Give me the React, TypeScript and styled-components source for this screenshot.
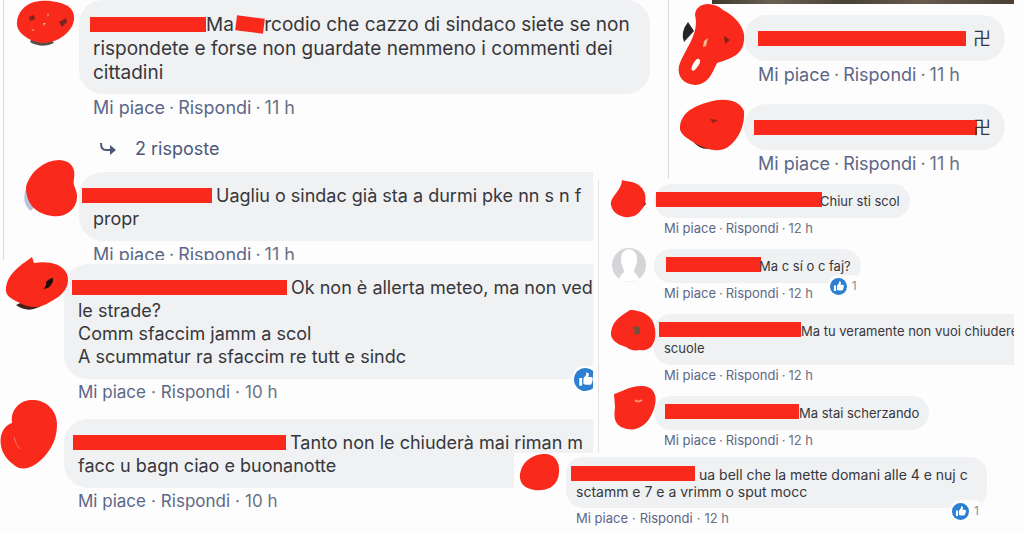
import React from "react";
import styled, { createGlobalStyle } from "styled-components";

const RED = "#f92a1c";

type Size = "large" | "medium" | "compact" | "small";

const bubbleSizes: Record<Size, { font: number; line: number; padding: string; radius: number }> = {
  large: { font: 19, line: 24, padding: "13px 14px 9px", radius: 24 },
  medium: { font: 18, line: 23, padding: "12px 14px 11px", radius: 24 },
  compact: { font: 14, line: 17, padding: "9px 10px 8px", radius: 17 },
  small: { font: 13, line: 17, padding: "8px 10px", radius: 17 },
};

const actionSizes: Record<Size, { font: number; gap: number; padding: string }> = {
  large: { font: 18, gap: 4, padding: "4px 14px 2px" },
  medium: { font: 17, gap: 5, padding: "3px 14px" },
  compact: { font: 13, gap: 4, padding: "1px 10px 3px" },
  small: { font: 13, gap: 3, padding: "1px 10px 3px" },
};

const Global = createGlobalStyle`
  * { box-sizing: border-box; }
  body { margin: 0; background: #fdfdfd; font-family: Inter, "Noto Sans CJK SC", sans-serif; color: #37373b; }
`;

const Page = styled.main`
  display: grid;
  grid-template-columns: 514fr 84fr 70fr 346fr;
  grid-template-rows: auto auto 1fr;
  height: 100vh;
  padding-right: 10px;
  overflow: hidden;
`;

const LeftStack = styled.div`
  grid-area: 1 / 1 / 4 / 4;
  display: flex;
  flex-direction: column;
  min-width: 0;
`;

const LeftClip = styled.section<{ $narrow?: boolean; $height?: number; $line?: boolean }>`
  width: ${(p) => (p.$narrow ? "calc(100% - 75px)" : "100%")};
  height: ${(p) => (p.$height ? `${p.$height}px` : "auto")};
  flex: none;
  clip-path: ${(p) => (p.$narrow ? "inset(-20px 0 0 0)" : "none")};
  background: ${(p) => (p.$line ? "linear-gradient(#d9dade, #d9dade) 3px 0 / 1px 100% no-repeat" : "none")};
`;

const TopRight = styled.section`
  grid-area: 1 / 4 / 2 / 5;
  display: flex;
  flex-direction: column;
  gap: 17px;
  height: 179px;
  border-left: 1px solid #d9dade;
`;

const Photo = styled.div`
  height: 4px;
  margin: 0 0 -6px 43px;
  background: linear-gradient(90deg, #3f382f, #6b6152 20%, #4b4238 45%, #665b4d 70%, #4a4036);
`;

const MidRight = styled.section`
  grid-area: 2 / 3 / 3 / 5;
  display: flex;
  flex-direction: column;
  gap: 9px;
  padding-top: 5px;
  height: 274px;
  overflow: hidden;
  background: #fdfdfd;
  border-left: 1px solid #e3e4e8;
`;

const Bottom = styled.section`
  grid-area: 3 / 2 / 4 / 5;
  z-index: 1;
  padding-top: 4px;
  background: #fdfdfd;
`;

const Row = styled.article<{ $top?: number }>`
  display: flex;
  align-items: flex-start;
  padding-top: ${(p) => p.$top ?? 0}px;
`;

const Avatar = styled.svg`
  position: relative;
  z-index: 1;
  flex: none;
  overflow: visible;
`;

const Body = styled.div`
  display: flex;
  flex-direction: column;
  align-items: flex-start;
  flex: 1;
  min-width: 0;
`;

const Bubble = styled.div<{ $size: Size; $fill?: boolean; $end?: number }>`
  position: relative;
  width: ${(p) => (p.$fill ? "auto" : "max-content")};
  align-self: ${(p) => (p.$fill ? "stretch" : "flex-start")};
  margin-right: ${(p) => p.$end ?? 0}px;
  padding: ${(p) => bubbleSizes[p.$size].padding};
  font-size: ${(p) => bubbleSizes[p.$size].font}px;
  line-height: ${(p) => bubbleSizes[p.$size].line}px;
  background: #f0f1f3;
  border-radius: ${(p) => bubbleSizes[p.$size].radius}px;
  ${(p) => p.$fill && p.$end === undefined && "border-top-right-radius: 0; border-bottom-right-radius: 0;"}
`;

const Text = styled.p`
  margin: 0;
  white-space: pre;
`;

const Bar = styled.span<{ $w: number; $start?: number; $gap?: number; $tilt?: boolean }>`
  display: inline-block;
  width: ${(p) => p.$w}px;
  height: 15px;
  margin: 0 ${(p) => p.$gap ?? 0}px 0 ${(p) => p.$start ?? 0}px;
  vertical-align: -1px;
  background: ${RED};
  transform: ${(p) => (p.$tilt ? "rotate(7deg)" : "none")};
`;

const Symbol = styled.span`
  font-size: 18px;
  line-height: 20px;
`;

const Actions = styled.div<{ $size: Size }>`
  display: flex;
  gap: ${(p) => actionSizes[p.$size].gap}px;
  padding: ${(p) => actionSizes[p.$size].padding};
  font-size: ${(p) => actionSizes[p.$size].font}px;
  line-height: ${(p) => (actionSizes[p.$size].font > 13 ? 20 : 18)}px;
  color: #6b7284;
  white-space: nowrap;
`;

const Action = styled.button`
  padding: 0;
  border: 0;
  background: none;
  font: inherit;
  color: #5c6788;
  cursor: pointer;
`;

const Replies = styled.button`
  display: flex;
  align-items: center;
  gap: 18px;
  margin: 19px 0 0 20px;
  padding: 0;
  border: 0;
  background: none;
  font: 18px/20px Inter, sans-serif;
  color: #4d5878;
  cursor: pointer;
`;

const Reaction = styled.span<{ $right: number }>`
  position: absolute;
  right: ${(p) => p.$right}px;
  bottom: -14px;
  display: flex;
  align-items: center;
  gap: 5px;
  padding: 2px 6px 2px 2px;
  border-radius: 12px;
  background: #fdfdfd;
  font-size: 12px;
  line-height: 18px;
  color: #8b8f98;
`;

function Like({ size }: { size: number }) {
  return (
    <svg width={size} height={size} viewBox="0 0 24 24" aria-label="Mi piace">
      <circle cx="12" cy="12" r="12" fill="#2d7fd0" />
      <path d="M5.5 10.5h3v8h-3zM9.800 10.800l2.700-3.300.4-2.700c1.800-.3 2.800 1 2.500 2.700l-.5 2h3.200c1.200 0 1.700 1 1.200 1.900.5.700.4 1.500-.2 2 .2.800 0 1.500-.6 1.900 0 1.500-.7 2.200-2 2.200h-3.700c-1.300 0-2.200-.4-3-.9z" fill="#fff" />
    </svg>
  );
}

function Footer({ time, size }: { time: string; size: Size }) {
  return (
    <Actions $size={size}>
      <Action>Mi piace</Action>
      <span>·</span>
      <Action>Rispondi</Action>
      <span>·</span>
      <span>{time}</span>
    </Actions>
  );
}

function ReplyArrow() {
  return (
    <svg width="18" height="16" viewBox="0 0 18 16" fill="none" stroke="#4d5878" strokeWidth="2">
      <path d="M2 2c0 5 2 7 5 7h7" />
      <path d="M11 4l6 5-6 5z" fill="#4d5878" stroke="none" />
    </svg>
  );
}

export default function App() {
  return (
    <>
      <Global />
      <Page>
        <LeftStack>
          <LeftClip $height={172} $line>
            <Row>
              <Avatar width="79" height="60" fill={RED}>
                <path d="M30 42Q42 49 54 43L50 38H32z" fill="#55504a" />
                <path d="M17 25C16 14 24 5 34 2C48-1 60 2 68 6C75 11 76 20 71 28C65 37 54 43 42 43C31 42 18 34 17 25z" />
                <path d="M29 17l5-2 1 4-5 2zM59 22l7-4 1 4-5 5z" fill="#7b241c" />
                <path d="M31 30l3-1 0 2zM43 23l3 0-2 3zM47 14l2 0-1 3z" fill="#f3a37c" />
              </Avatar>
              <Body>
                <Bubble $size="large" $fill $end={18}>
                  <Text>
                    <Bar $w={116} $start={-3} />Ma <Bar $w={28} $start={-3} $tilt />rcodio che cazzo di sindaco siete se non{"\n"}
                    {"rispondete e forse non guardate nemmeno i commenti dei\ncittadini"}
                  </Text>
                </Bubble>
                <Footer size="large" time="11 h" />
                <Replies>
                  <ReplyArrow />2 risposte
                </Replies>
              </Body>
            </Row>
          </LeftClip>

          <LeftClip $narrow $height={88} $line>
            <Row>
              <Avatar width="79" height="60" fill={RED}>
                <path d="M27 13Q20 31 31 39L38 30z" fill="#b9c4dc" />
                <path d="M26 15C30 0 44-12 60-12C71-11 76-4 74 7C72 14 78 18 77 26C76 38 65 46 52 44C38 42 26 34 26 15z" />
              </Avatar>
              <Body>
                <Bubble $size="medium" $fill>
                  <Text>
                    <Bar $w={130} $start={-11} $gap={4} />{"Uagliu o sindac già sta a durmi pke nn s n f\npropr"}
                  </Text>
                </Bubble>
                <Footer size="large" time="11 h" />
              </Body>
            </Row>
          </LeftClip>

          <LeftClip $narrow>
            <Row $top={4}>
              <Avatar width="64" height="60" fill={RED}>
                <path d="M16 41Q31 52 48 37L40 30z" fill="#43211a" />
                <path d="M6 23C8 10 18 3 32-7L34-1C47-3 62-1 67 10C71 23 62 32 50 38C40 45 29 44 20 39C9 34 5 31 6 23z" />
                <path d="M43 25Q47 22 46 18Q50 14 53 14Q54 19 48 24z" fill="#210e0b" />
              </Avatar>
              <Body>
                <Bubble $size="medium" $fill>
                  <Text>
                    <Bar $w={215} $start={-6} $gap={4} />{"Ok non è allerta meteo, ma non ved\nle strade?\nComm sfaccim jamm a scol\nA scummatur ra sfaccim re tutt e sindc"}
                  </Text>
                  <Reaction $right={-20}><Like size={23} />1</Reaction>
                </Bubble>
                <Footer size="medium" time="10 h" />
              </Body>
            </Row>
            <Row $top={14}>
              <Avatar width="64" height="60" fill={RED}>
                <path d="M12 4C10-11 22-20 34-19C48-18 57-7 57 5C57 18 53 28 44 38C34 49 22 53 14 46C4 39-1 29 1 17C3 10 6 6 12 4z" />
                <path d="M14 18q2 9 6 12" fill="none" stroke="#ff7060" />
              </Avatar>
              <Body>
                <Bubble $size="medium" $fill>
                  <Text>
                    <Bar $w={213} $start={-5} $gap={4} />{"Tanto non le chiuderà mai riman m\nfacc u bagn ciao e buonanotte"}
                  </Text>
                </Bubble>
                <Footer size="medium" time="10 h" />
              </Body>
            </Row>
          </LeftClip>
        </LeftStack>

        <TopRight>
          <Photo />
          <Row>
            <Avatar width="75" height="60" fill={RED}>
              <path d="M19 7Q11 17 15 27L25 16z" fill="#26262a" />
              <path fillRule="evenodd" d="M26 0C27-13 44-14 54-5C66 1 77 13 75 25C74 39 64 43 48 48C43 58 40 69 26 70C14 69 8 61 10 51C15 35 31 19 26 0zM24 49C29 39 34 45 29 51C25 58 20 57 24 49z" />
              <path d="M35 26l4-3-2 8-3 1z" fill="#f0b48e" />
              <path d="M55 21l6 4-5 4z" fill="#82211b" />
            </Avatar>
            <Body>
              <Bubble $size="medium">
                <Text><Bar $w={208} $gap={7} /><Symbol>卍</Symbol></Text>
              </Bubble>
              <Footer size="large" time="11 h" />
            </Body>
          </Row>
          <Row>
            <Avatar width="75" height="60" fill={RED}>
              <path d="M23 36Q31 48 46 44L38 34z" fill="#402822" />
              <path d="M11 22C13 8 25 2 40-2C55-7 71-4 75 7C76 20 71 34 59 43C48 50 34 44 24 38C14 32 10 28 11 22z" />
              <path d="M41 15l8 1-5 3z" fill="#8a231c" />
            </Avatar>
            <Body>
              <Bubble $size="medium">
                <Text><Bar $w={223} $start={-4} $gap={-4} /><Symbol>卍</Symbol></Text>
              </Bubble>
              <Footer size="large" time="11 h" />
            </Body>
          </Row>
        </TopRight>

        <MidRight>
          <Row>
            <Avatar width="55" height="40" fill={RED}>
              <path d="M13 22Q27 44 47 20L40 5z" fill="#53221b" />
              <path d="M23-4C27-2 35-4 42 3C50 12 47 24 37 31C28 36 14 32 12 21C11 12 22 8 23-4z" />
            </Avatar>
            <Body>
              <Bubble $size="small"><Text><Bar $w={166} $start={-8} $gap={-2} />Chiur sti scol</Text></Bubble>
              <Footer size="small" time="12 h" />
            </Body>
          </Row>
          <Row>
            <Avatar width="55" height="40">
              <circle cx="30" cy="16" r="17" fill="#d3d5d8" />
              <path d="M22 10C22-3 38-3 38 10C38 17 35 19 35 23Q39 26 40 30Q30 36 20 30Q21 26 25 23C25 19 22 17 22 10z" fill="#fff" />
            </Avatar>
            <Body>
              <Bubble $size="small">
                <Text><Bar $w={95} $start={2} $gap={-2} />Ma c sí o c faj?</Text>
                <Reaction $right={-2}><Like size={17} />1</Reaction>
              </Bubble>
              <Footer size="small" time="12 h" />
            </Body>
          </Row>
          <Row>
            <Avatar width="55" height="40" fill={RED}>
              <path d="M12 18C14 6 22 2 31-4C43-4 55 2 56 15C58 28 52 38 41 36C35 37 31 36 27 33C17 30 11 25 12 18z" />
              <path d="M34 12l7 1 0 7-5 1z" fill="#76503d" />
            </Avatar>
            <Body>
              <Bubble $size="small" $fill>
                <Text><Bar $w={142} $start={-5} />{"Ma tu veramente non vuoi chiudere\nscuole"}</Text>
              </Bubble>
              <Footer size="small" time="12 h" />
            </Body>
          </Row>
          <Row>
            <Avatar width="55" height="40" fill={RED}>
              <path d="M15-2C22-4 33-11 44-10C56-9 59 1 55 13C49 30 38 35 28 33C14 30 15 20 16 11z" />
              <path d="M36 4q3 3 7 0" fill="none" stroke="#ff8f70" strokeWidth="2" />
            </Avatar>
            <Body>
              <Bubble $size="small"><Text><Bar $w={134} $start={1} />Ma stai scherzando</Text></Bubble>
              <Footer size="small" time="12 h" />
            </Body>
          </Row>
        </MidRight>

        <Bottom>
          <Row>
            <Avatar width="52" height="40" fill={RED}>
              <path d="M6 17C8 3 21-4 33-3C44-1 47 10 44 21C40 32 30 34 20 33C10 31 5 26 6 17z" />
            </Avatar>
            <Body>
              <Bubble $size="compact" $fill $end={27}>
                <Text><Bar $w={124} $start={-5} $gap={4} />{"ua bell che la mette domani alle 4 e nuj c\nsctamm e 7 e a vrimm o sput mocc"}</Text>
                <Reaction $right={2}><Like size={17} />1</Reaction>
              </Bubble>
              <Footer size="compact" time="12 h" />
            </Body>
          </Row>
        </Bottom>
      </Page>
    </>
  );
}
